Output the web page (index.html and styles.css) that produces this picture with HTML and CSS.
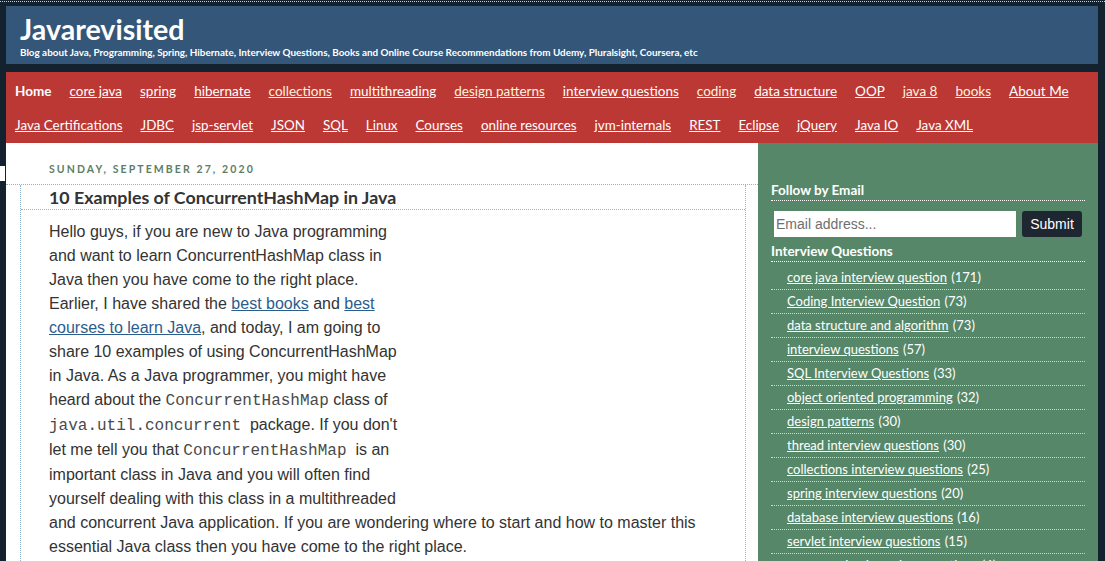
FILE: index.html
```html
<!DOCTYPE html>
<html>
<head>
<meta charset="utf-8">
<link rel="stylesheet" href="styles.css">
</head>
<body>
<div class="topline"></div>
<div class="edge-mark"></div>
<div class="outer">
  <header class="header">
    <h1 class="title">Javarevisited</h1>
    <p class="tagline">Blog about Java, Programming, Spring, Hibernate, Interview Questions, Books and Online Course Recommendations from Udemy, Pluralsight, Coursera, etc</p>
  </header>
  <nav class="nav">
    <div class="nav-row">
      <span class="nav-home">Home</span>
      <a href="#">core java</a>
      <a href="#">spring</a>
      <a href="#">hibernate</a>
      <a href="#" class="cream">collections</a>
      <a href="#">multithreading</a>
      <a href="#" class="cream">design patterns</a>
      <a href="#">interview questions</a>
      <a href="#" class="cream">coding</a>
      <a href="#">data structure</a>
      <a href="#">OOP</a>
      <a href="#" class="cream">java 8</a>
      <a href="#" class="cream">books</a>
      <a href="#">About Me</a>
    </div>
    <div class="nav-row">
      <a href="#">Java Certifications</a>
      <a href="#">JDBC</a>
      <a href="#">jsp-servlet</a>
      <a href="#">JSON</a>
      <a href="#">SQL</a>
      <a href="#">Linux</a>
      <a href="#">Courses</a>
      <a href="#">online resources</a>
      <a href="#">jvm-internals</a>
      <a href="#">REST</a>
      <a href="#">Eclipse</a>
      <a href="#">jQuery</a>
      <a href="#">Java IO</a>
      <a href="#">Java XML</a>
    </div>
  </nav>
  <div class="main">
    <section class="content">
      <div class="date">Sunday, September 27, 2020</div>
      <div class="post">
        <h2 class="post-title">10 Examples of ConcurrentHashMap in Java</h2>
        <div class="post-body">
          Hello guys, if you are new to Java programming<br>
          and want to learn ConcurrentHashMap class in<br>
          Java then you have come to the right place.<br>
          Earlier, I have shared the <a href="#">best books</a> and <a href="#">best<br>
          courses to learn Java</a>, and today, I am going to<br>
          share 10 examples of using ConcurrentHashMap<br>
          in Java. As a Java programmer, you might have<br>
          heard about the <code>ConcurrentHashMap</code> class of<br>
          <code>java.util.concurrent</code>&nbsp; package. If you don't<br>
          let me tell you that <code>ConcurrentHashMap</code>&nbsp; is an<br>
          important class in Java and you will often find<br>
          yourself dealing with this class in a multithreaded<br>
          and concurrent Java application. If you are wondering where to start and how to master this<br>
          essential Java class then you have come to the right place.
        </div>
      </div>
    </section>
    <aside class="sidebar">
      <h3 class="widget-title">Follow by Email</h3>
      <form class="email-form">
        <input class="email-input" type="text" placeholder="Email address...">
        <button class="submit" type="button">Submit</button>
      </form>
      <h3 class="widget-title">Interview Questions</h3>
      <ul class="labels">
        <li><a href="#">core java interview question</a> (171)</li>
        <li><a href="#">Coding Interview Question</a> (73)</li>
        <li><a href="#">data structure and algorithm</a> (73)</li>
        <li><a href="#">interview questions</a> (57)</li>
        <li><a href="#">SQL Interview Questions</a> (33)</li>
        <li><a href="#">object oriented programming</a> (32)</li>
        <li><a href="#">design patterns</a> (30)</li>
        <li><a href="#">thread interview questions</a> (30)</li>
        <li><a href="#">collections interview questions</a> (25)</li>
        <li><a href="#">spring interview questions</a> (20)</li>
        <li><a href="#">database interview questions</a> (16)</li>
        <li><a href="#">servlet interview questions</a> (15)</li>
        <li><a href="#">programming interview questions</a> (6)</li>
      </ul>
    </aside>
  </div>
</div>
</body>
</html>
```
FILE: styles.css
```css
html, body {
  margin: 0;
  padding: 0;
}
body {
  background: #14212e;
  height: 561px;
  overflow: hidden;
  position: relative;
}
.topline {
  height: 0;
  border-top: 1px dotted #c9ced3;
  margin-top: 1px;
}
.edge-mark {
  position: absolute;
  left: 0;
  top: 166px;
  width: 5px;
  height: 15px;
  background: #ffffff;
}
.outer {
  padding: 4px 7px 0 6px;
}
.header {
  background: #335679;
  height: 58px;
  padding-left: 14px;
  box-sizing: border-box;
  padding-top: 10px;
}
.title {
  margin: 0;
  font-family: "Lato", "Liberation Sans", sans-serif;
  font-weight: 700;
  font-size: 28.6px;
  line-height: 26px;
  color: #ffffff;
}
.tagline {
  margin: 4px 0 0;
  font-family: "Lato", "Liberation Sans", sans-serif;
  font-weight: 700;
  font-size: 9.9px;
  line-height: 13px;
  color: #ffffff;
}
.nav {
  margin-top: 8px;
  background: #bb3835;
  height: 71px;
  padding: 2px 9px 0;
  box-sizing: border-box;
}
.nav-row {
  display: flex;
  gap: 18px;
  height: 34px;
  align-items: center;
  font-family: "Lato", "Liberation Sans", sans-serif;
  font-size: 13.5px;
}
.nav-row + .nav-row {
  font-size: 13.4px;
}
.nav-row a {
  color: #ffffff;
  text-decoration: underline;
}
.nav-row a.cream {
  color: #fff4dc;
}
.nav-home {
  color: #ffffff;
  font-weight: 700;
}
.main {
  display: flex;
  height: 420px;
}
.content {
  width: 752px;
  background: #ffffff;
  padding-top: 19px;
  box-sizing: border-box;
}
.date {
  font-family: "Lato", "DejaVu Sans", sans-serif;
  font-weight: 700;
  font-size: 10.5px;
  letter-spacing: 2.1px;
  text-transform: uppercase;
  color: #5d7d66;
  padding-left: 43px;
  line-height: 14px;
  height: 22px;
  border-bottom: 1px dotted #8fb3cc;
}
.post {
  margin: 0 12px 0 14px;
  border-left: 1px dotted #8fb3cc;
  border-right: 1px dotted #8fb3cc;
  height: 400px;
}
.post-title {
  margin: 0;
  font-family: "Lato", "Liberation Sans", sans-serif;
  font-weight: 700;
  font-size: 17.8px;
  color: #333333;
  line-height: 24px;
  padding-left: 28px;
  border-bottom: 1px dotted #8fb3cc;
}
.post-body {
  padding: 10px 0 0 28px;
  font-family: "Liberation Sans", Arial, sans-serif;
  font-size: 16px;
  line-height: 24px;
  color: #333333;
}
.post-body a {
  color: #2b5d8c;
  text-decoration: underline;
}
.post-body code {
  font-family: "Liberation Mono", "Courier New", monospace;
  font-size: 16px;
  color: #4a4a4a;
}
.sidebar {
  width: 340px;
  background: #568769;
  padding: 39px 13px 0;
  box-sizing: border-box;
  font-family: "Lato", "Liberation Sans", sans-serif;
  color: #ffffff;
}
.widget-title {
  margin: 0;
  font-size: 13.5px;
  font-weight: 700;
  line-height: 17px;
  padding-bottom: 1px;
  border-bottom: 1px dotted #ffffff;
}
.email-form {
  display: flex;
  margin: 10px 0 6px;
  padding-left: 3px;
  gap: 6px;
  height: 26px;
}
.email-input {
  width: 242px;
  height: 26px;
  box-sizing: border-box;
  border: none;
  padding: 0 2px;
  margin: 0;
  font-family: "Liberation Sans", Arial, sans-serif;
  font-size: 14px;
  color: #333;
}
.email-input::placeholder {
  color: #6f6f6f;
}
.submit {
  width: 60px;
  height: 26px;
  border: none;
  border-radius: 3px;
  background: #1e2631;
  color: #ffffff;
  font-family: "Liberation Sans", Arial, sans-serif;
  font-size: 14px;
  padding: 0;
}
.labels {
  list-style: none;
  margin: 0;
  padding: 4px 0 0;
}
.labels li {
  height: 23px;
  line-height: 23px;
  padding-left: 16px;
  border-bottom: 1px dotted #c6d7cc;
  font-size: 13px;
}
.labels a {
  color: #ffffff;
  text-decoration: underline;
  margin-right: 1px;
}
```
